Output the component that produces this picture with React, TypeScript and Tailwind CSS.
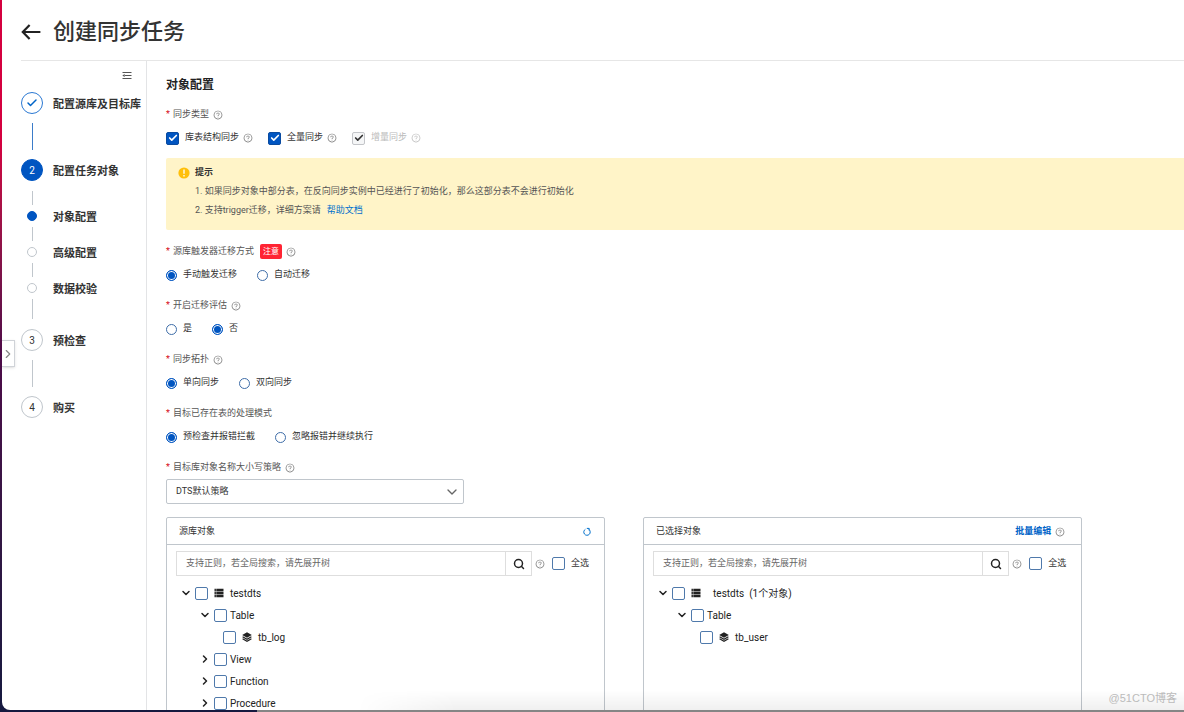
import { ReactNode, useId, useState } from "react";
import { AiOutlineQuestionCircle } from "react-icons/ai";
import { Check, ChevronDown, ChevronRight, Search } from "lucide-react";

function Help({ className = "text-[#777]" }: { className?: string }) {
  return (
    <button type="button" aria-label="帮助" className={`shrink-0 ${className}`}>
      <AiOutlineQuestionCircle className="size-[10px]" />
    </button>
  );
}

interface CheckboxProps {
  label?: string;
  children?: ReactNode;
  defaultChecked?: boolean;
  disabled?: boolean;
  className?: string;
}

function Checkbox({ label, children, defaultChecked, disabled, className = "gap-1.5" }: CheckboxProps) {
  return (
    <label className={`inline-flex items-center ${className}`}>
      <span className="grid size-[13px] shrink-0 place-items-center">
        <input
          type="checkbox"
          aria-label={label}
          defaultChecked={defaultChecked}
          disabled={disabled}
          className="peer col-start-1 row-start-1 size-[13px] appearance-none rounded-xs border border-[#4f79ab] bg-white checked:border-[#0a4ba0] checked:bg-[#0055c1] disabled:border-[#c3c5c9] disabled:bg-[#f5f6f7]"
        />
        <Check
          strokeWidth={4}
          className="pointer-events-none invisible col-start-1 row-start-1 size-[10px] text-white peer-checked:visible peer-disabled:text-[#333]"
        />
      </span>
      {children}
    </label>
  );
}

interface FieldProps {
  label: string;
  help?: boolean;
  badge?: string;
  children: ReactNode;
}

function Field({ label, help = true, badge, children }: FieldProps) {
  return (
    <fieldset>
      <legend className="flex h-6 items-center pt-px text-[#555]">
        <span className="w-[7px] text-[#d50b16]">*</span>
        {label}
        {badge && <span className="ml-1.5 rounded-xs bg-[#ff2433] px-[3px] text-[8px] leading-[15px] text-white">{badge}</span>}
        {help && <span className="ml-1 flex"><Help /></span>}
      </legend>
      {children}
    </fieldset>
  );
}

function RadioGroup({ options, selected }: { options: string[]; selected: number }) {
  const name = useId();
  const [value, setValue] = useState(selected);
  return (
    <div className="flex h-6 items-center gap-5">
      {options.map((option, i) => (
        <label key={option} className="flex items-center gap-1.5">
          <input
            type="radio"
            name={name}
            checked={value === i}
            onChange={() => setValue(i)}
            className="size-[11px] appearance-none rounded-full border border-[#3e6da8] bg-white checked:border-[#0055c1] checked:bg-[#0055c1] checked:shadow-[inset_0_0_0_1px_white]"
          />
          {option}
        </label>
      ))}
    </div>
  );
}

function BackIcon() {
  return (
    <svg viewBox="0 0 20 16" className="h-4 w-5" fill="none" stroke="currentColor" strokeWidth="2.2">
      <path d="M8.6 1L1.8 8l6.8 7M2 8h17.4" />
    </svg>
  );
}

function DatabaseIcon() {
  return (
    <svg viewBox="0 0 10 10" className="size-[10px] shrink-0 text-[#222]" fill="currentColor">
      <path d="M0.5 0.8h1.4v2.4H0.5zM2.3 0.8h7.2v2.4H2.3zM0.5 3.8h1.4v2.4H0.5zM2.3 3.8h7.2v2.4H2.3zM0.5 6.8h1.4v2.4H0.5zM2.3 6.8h7.2v2.4H2.3z" />
    </svg>
  );
}

function LayersIcon() {
  return (
    <svg viewBox="0 0 10 10" className="size-[10px] shrink-0 text-[#222]">
      <path d="M5 0.3L9.8 3 5 5.8 0.2 3z" fill="currentColor" />
      <path d="M0.6 4.8L5 7.3l4.4-2.5M0.6 6.7L5 9.2l4.4-2.5" fill="none" stroke="currentColor" strokeWidth="1.3" />
    </svg>
  );
}

function ReloadIcon() {
  return (
    <svg viewBox="0 0 10 10" className="size-[10px]" fill="none" stroke="currentColor" strokeWidth="1">
      <path d="M3.4 2.3A3.2 3.2 0 1 0 6.9 2.5" />
      <path d="M4.8 1.4h2.4v2.2" />
    </svg>
  );
}

interface TreeItem {
  name: string;
  level: 0 | 1 | 2;
  open?: boolean;
}

const sourceTree: TreeItem[] = [
  { name: "testdts", level: 0, open: true },
  { name: "Table", level: 1, open: true },
  { name: "tb_log", level: 2 },
  { name: "View", level: 1 },
  { name: "Function", level: 1 },
  { name: "Procedure", level: 1 },
];

const selectedTree: TreeItem[] = [
  { name: "testdts  (1个对象)", level: 0, open: true },
  { name: "Table", level: 1, open: true },
  { name: "tb_user", level: 2 },
];

const indents = ["pl-1", "pl-[23px]", "pl-[47px]"];

function Tree({ items, rootGap }: { items: TreeItem[]; rootGap: string }) {
  return (
    <ul className="mt-1.5 text-[10px] text-[#222]">
      {items.map((item) => (
        <li key={item.name} className={`flex h-[22px] items-center ${indents[item.level]}`}>
          {item.level < 2 && (
            <button type="button" aria-label={item.open ? "收起" : "展开"} className="mr-[3px] flex w-3 justify-center">
              {item.open ? <ChevronDown strokeWidth={3} className="size-3" /> : <ChevronRight strokeWidth={3} className="size-3" />}
            </button>
          )}
          <Checkbox className={item.level === 1 ? "gap-[3px]" : "gap-1.5"}>
            {item.level === 0 && <DatabaseIcon />}
            {item.level === 2 && <LayersIcon />}
            <span className={`whitespace-pre ${item.level === 0 ? rootGap : ""}`}>{item.name}</span>
          </Checkbox>
        </li>
      ))}
    </ul>
  );
}

interface PanelProps {
  title: string;
  action: ReactNode;
  items: TreeItem[];
  rootGap?: string;
}

function Panel({ title, action, items, rootGap = "" }: PanelProps) {
  return (
    <section className="h-60 rounded-t-xs border border-[#c0c6cc]">
      <header className="flex h-[27px] items-center justify-between border-b border-[#c0c6cc] px-3 pt-px">
        <h3>{title}</h3>
        {action}
      </header>
      <div className="px-[9px] pt-1.5">
        <div className="flex items-center pr-1.5">
          <div className="flex h-[25px] min-w-0 flex-1 border border-[#dedede]">
            <input
              type="text"
              aria-label={title}
              placeholder="支持正则，若全局搜索，请先展开树"
              className="min-w-0 flex-1 px-[9px] pt-px outline-none placeholder:text-[#666]"
            />
            <button type="button" aria-label="搜索" className="flex w-[26px] items-center justify-center border-l border-[#dedede] text-[#222]">
              <Search strokeWidth={3} className="size-3" />
            </button>
          </div>
          <span className="mr-[7px] ml-[3px] flex"><Help /></span>
          <Checkbox>全选</Checkbox>
        </div>
        <Tree items={items} rootGap={rootGap} />
      </div>
    </section>
  );
}

function Step({ marker, label }: { marker: ReactNode; label: string }) {
  return (
    <li className="flex items-center">
      <span className="mr-[10px] flex w-[22px] shrink-0 justify-center">{marker}</span>
      <span className="pt-0.5 text-[11px] leading-none font-bold whitespace-nowrap text-[#333]">{label}</span>
    </li>
  );
}

function SubStep({ label, active }: { label: string; active?: boolean }) {
  return (
    <li className="flex h-[10px] items-center">
      <span className="mr-[10px] flex w-[22px] shrink-0 justify-center">
        <span className={`size-[10px] rounded-full border ${active ? "border-[#0055c1] bg-[#0055c1]" : "border-[#c0c6cc]"}`} />
      </span>
      <span className="pt-0.5 text-[11px] leading-none font-bold text-[#333]">{label}</span>
    </li>
  );
}

function Connector({ className }: { className: string }) {
  return <li aria-hidden className={`ml-[11px] w-px ${className}`} />;
}

function Circle({ className, children }: { className: string; children: ReactNode }) {
  return <span className={`flex size-[22px] items-center justify-center rounded-full border text-[10px] ${className}`}>{children}</span>;
}

function Sidebar() {
  return (
    <aside className="flex w-[126px] shrink-0 flex-col border-r border-[#e3e4e6]">
      <button type="button" aria-label="收起步骤" className="mt-[10px] mr-[14px] self-end text-[#555]">
        <svg viewBox="0 0 10 9" className="h-[9px] w-[10px]" fill="none" stroke="currentColor" strokeWidth="1">
          <path d="M0.5 1.5h9M3 4.5h6.5M0.5 7.5h9" />
          <path d="M0.3 4.5l2.4-1.6v3.2z" fill="currentColor" stroke="none" />
        </svg>
      </button>
      <ol className="mt-3">
        <Step
          label="配置源库及目标库"
          marker={<Circle className="border-[#2b79d3] text-[#0064c8]"><Check strokeWidth={3} className="size-3" /></Circle>}
        />
        <Connector className="my-[9px] h-[27px] bg-[#3b7cc9]" />
        <Step label="配置任务对象" marker={<Circle className="border-[#0055c1] bg-[#0055c1] text-white">2</Circle>} />
        <Connector className="mt-[10px] mb-1.5 h-[14px] bg-[#c0c6cc]" />
        <SubStep label="对象配置" active />
        <Connector className="my-1.5 h-[14px] bg-[#c0c6cc]" />
        <SubStep label="高级配置" />
        <Connector className="my-1.5 h-[14px] bg-[#c0c6cc]" />
        <SubStep label="数据校验" />
        <Connector className="mt-1.5 mb-[10px] h-5 bg-[#c0c6cc]" />
        <Step label="预检查" marker={<Circle className="border-[#c0c6cc] text-[#333]">3</Circle>} />
        <Connector className="my-[9px] h-[27px] bg-[#c0c6cc]" />
        <Step label="购买" marker={<Circle className="border-[#c0c6cc] text-[#333]">4</Circle>} />
      </ol>
    </aside>
  );
}

export default function App() {
  return (
    <div className="flex h-screen flex-col overflow-hidden bg-linear-to-b from-[#d4003f] from-20% via-[#4c0a48] via-50% to-[#15193f] font-[Roboto,'Noto_Sans_CJK_SC',sans-serif] text-[9px] text-[#333]">
      <div className="relative ml-0.5 flex min-h-0 flex-1 flex-col overflow-hidden rounded-bl-lg bg-white">
        <header className="ml-[19px] flex h-[61px] shrink-0 items-center gap-3 border-b border-[#e6e6e6] pt-1">
          <a href="#" aria-label="返回" className="text-[#222]">
            <BackIcon />
          </a>
          <h1 className="text-[22px] leading-none font-medium">创建同步任务</h1>
        </header>

        <div className="ml-[19px] flex flex-1">
          <Sidebar />
          <main className="min-w-0 flex-1 pt-3 pl-[19px]">
            <h2 className="flex h-6 items-center text-[12px] font-bold text-[#222]">对象配置</h2>
            <div className="mt-[5px]">
              <Field label="同步类型">
                <div className="flex h-6 items-center gap-[15px]">
                  <span className="flex items-center gap-1">
                    <Checkbox defaultChecked>库表结构同步</Checkbox>
                    <Help />
                  </span>
                  <span className="flex items-center gap-1">
                    <Checkbox defaultChecked>全量同步</Checkbox>
                    <Help />
                  </span>
                  <span className="flex items-center gap-1 text-[#bbb]">
                    <Checkbox defaultChecked disabled>增量同步</Checkbox>
                    <Help className="text-[#bbb]" />
                  </span>
                </div>
              </Field>
            </div>

            <div className="mt-2 rounded-l-xs bg-[#fff4c8] px-3 pt-1.5 pb-[10px]">
              <div className="flex h-[18px] items-center gap-[5px]">
                <svg viewBox="0 0 12 12" className="size-3">
                  <circle cx="6" cy="6" r="5.6" fill="#ffbf0a" />
                  <path d="M6 2.6v4.2M6 8v1.4" stroke="white" strokeWidth="1.3" />
                </svg>
                <strong>提示</strong>
              </div>
              <ol className="list-inside list-decimal pl-[17px] leading-[19px] text-[#555]">
                <li>如果同步对象中部分表，在反向同步实例中已经进行了初始化，那么这部分表不会进行初始化</li>
                <li>
                  支持trigger迁移，详细方案请
                  <a href="#" className="ml-1.5 text-[#0070cc]">帮助文档</a>
                </li>
              </ol>
            </div>

            <div className="mt-[9px] flex flex-col gap-1.5">
              <Field label="源库触发器迁移方式" badge="注意">
                <RadioGroup options={["手动触发迁移", "自动迁移"]} selected={0} />
              </Field>
              <Field label="开启迁移评估">
                <RadioGroup options={["是", "否"]} selected={1} />
              </Field>
              <Field label="同步拓扑">
                <RadioGroup options={["单向同步", "双向同步"]} selected={0} />
              </Field>
              <Field label="目标已存在表的处理模式" help={false}>
                <RadioGroup options={["预检查并报错拦截", "忽略报错并继续执行"]} selected={0} />
              </Field>
              <Field label="目标库对象名称大小写策略">
                <div className="grid w-[298px] items-center">
                  <select
                    aria-label="目标库对象名称大小写策略"
                    className="col-start-1 row-start-1 h-[25px] appearance-none rounded-xs border border-[#c0c6cc] bg-white px-[9px]"
                  >
                    <option>DTS默认策略</option>
                  </select>
                  <ChevronDown strokeWidth={2} className="pointer-events-none col-start-1 row-start-1 mr-1 size-4 justify-self-end text-[#666]" />
                </div>
              </Field>
            </div>

            <div className="mt-[13px] grid w-9/10 grid-cols-2 gap-[38px]">
              <Panel
                title="源库对象"
                items={sourceTree}
                action={<button type="button" aria-label="刷新" className="text-[#0070cc]"><ReloadIcon /></button>}
              />
              <Panel
                title="已选择对象"
                items={selectedTree}
                rootGap="ml-1.5"
                action={
                  <span className="flex items-center gap-1 pr-1">
                    <a href="#" className="font-bold text-[#0064c8]">批量编辑</a>
                    <Help />
                  </span>
                }
              />
            </div>
          </main>
        </div>

        <button
          type="button"
          aria-label="展开菜单"
          className="absolute top-[340px] left-0 flex h-[27px] w-[13px] items-center justify-center border border-l-0 border-[#d0d3d8] bg-white text-[#888] shadow-sm"
        >
          <ChevronRight strokeWidth={2} className="size-[14px] shrink-0" />
        </button>
        <div className="pointer-events-none absolute right-0 bottom-0 left-[30%] h-5 bg-linear-to-b from-transparent to-black/6 [mask-image:linear-gradient(to_right,transparent,black_12%)]" />
        <span className="absolute right-[7px] bottom-1 font-['Liberation_Sans','Noto_Sans_CJK_SC',sans-serif] text-[11px] leading-4 text-[#bbb]">@51CTO博客</span>
      </div>
      <div className="ml-[21.7%] h-0.5 shrink-0 bg-[#858585]" />
    </div>
  );
}
